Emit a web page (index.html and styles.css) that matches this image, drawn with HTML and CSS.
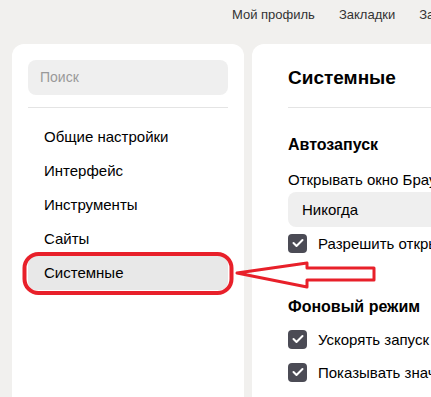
FILE: index.html
```html
<!DOCTYPE html>
<html lang="ru">
<head>
  <meta charset="UTF-8">
  <title>Настройки</title>
  <link rel="stylesheet" href="styles.css">
</head>
<body>
  <div class="topnav">
    <span>Мой профиль</span>
    <span>Закладки</span>
    <span>Загрузки</span>
  </div>

  <div class="main">
    <div class="sidebar">
      <div class="search">Поиск</div>
      <div class="sep"></div>
      <div class="menu-item">Общие настройки</div>
      <div class="menu-item">Интерфейс</div>
      <div class="menu-item">Инструменты</div>
      <div class="menu-item">Сайты</div>
      <div class="menu-item active">Системные</div>
    </div>

    <div class="content">
      <h1>Системные</h1>
      <div class="sep wide"></div>

      <h2 class="first">Автозапуск</h2>
      <div class="label">Открывать окно Браузера при запуске Windows</div>
      <div class="select">Никогда</div>
      <div class="check-row">
        <span class="box"><svg width="12" height="10" viewBox="0 0 12 10"><polyline points="1.5,5 4.5,8 10.5,2" fill="none" stroke="#fff" stroke-width="2" stroke-linecap="round" stroke-linejoin="round"/></svg></span>
        Разрешить открывать вкладки при запуске
      </div>

      <h2>Фоновый режим</h2>
      <div class="check-row">
        <span class="box"><svg width="12" height="10" viewBox="0 0 12 10"><polyline points="1.5,5 4.5,8 10.5,2" fill="none" stroke="#fff" stroke-width="2" stroke-linecap="round" stroke-linejoin="round"/></svg></span>
        Ускорять запуск браузера
      </div>
      <div class="check-row second">
        <span class="box"><svg width="12" height="10" viewBox="0 0 12 10"><polyline points="1.5,5 4.5,8 10.5,2" fill="none" stroke="#fff" stroke-width="2" stroke-linecap="round" stroke-linejoin="round"/></svg></span>
        Показывать значок в области уведомлений
      </div>
    </div>
  </div>

  <!-- red annotation drawn over the page -->
  <svg class="markup" width="431" height="397" viewBox="0 0 431 397">
    <rect x="24.5" y="254" width="207" height="39" rx="14" fill="none" stroke="#e8202a" stroke-width="4"/>
    <polygon points="237,273 307,263 307,268 374,268 374,280 307,280 307,287" fill="none" stroke="#e8202a" stroke-width="3" stroke-linejoin="round"/>
  </svg>
</body>
</html>
```

FILE: styles.css
```css
body {
  margin: 0;
  background: #f1f0ee;
  font-family: "Liberation Sans", Arial, sans-serif;
  color: #000;
  overflow: hidden;
  height: 397px;
}

.topnav {
  display: flex;
  gap: 24px;
  padding: 7px 0 0 232px;
  height: 44px;
  box-sizing: border-box;
  font-size: 13px;
  color: #333;
  white-space: nowrap;
}

.main {
  display: flex;
  gap: 8px;
  padding-left: 12px;
  height: 353px;
}

.sidebar {
  width: 232px;
  flex: none;
  background: #fff;
  border-radius: 12px 12px 0 0;
  padding: 16px;
  box-sizing: border-box;
}

.search {
  height: 35px;
  background: #efefef;
  border-radius: 8px;
  padding-left: 12px;
  line-height: 35px;
  font-size: 14px;
  color: #999;
}

.sep {
  height: 1px;
  background: #e4e4e4;
  margin: 12px 0;
}

.menu-item {
  height: 34px;
  line-height: 34px;
  padding-left: 16px;
  font-size: 15px;
  border-radius: 8px;
}

.menu-item.active {
  background: #e8e8e8;
}

.content {
  flex: none;
  width: 600px;
  background: #fff;
  border-radius: 12px 12px 0 0;
  padding: 20px 0 0 36px;
  box-sizing: border-box;
  white-space: nowrap;
}

h1 {
  margin: 0;
  font-size: 19px;
  line-height: 28px;
  font-weight: bold;
}

.sep.wide {
  margin: 15px 0 0;
}

h2 {
  margin: 43px 0 0;
  font-size: 16px;
  line-height: 22px;
  font-weight: bold;
}

h2.first {
  margin-top: 26px;
}

.label {
  margin-top: 13px;
  font-size: 15px;
  line-height: 22px;
}

.select {
  margin-top: 1px;
  height: 35px;
  line-height: 35px;
  background: #efefef;
  border-radius: 8px;
  padding-left: 14px;
  font-size: 15px;
}

.check-row {
  display: flex;
  align-items: center;
  gap: 11px;
  height: 20px;
  margin-top: 6px;
  font-size: 15px;
}

h2 + .check-row {
  margin-top: 11px;
}

.check-row.second {
  margin-top: 13px;
}

.box {
  width: 19px;
  height: 19px;
  border-radius: 4px;
  background: #4b4b55;
  display: flex;
  align-items: center;
  justify-content: center;
  flex: none;
}

.markup {
  position: absolute;
  top: 0;
  left: 0;
  pointer-events: none;
}
```
